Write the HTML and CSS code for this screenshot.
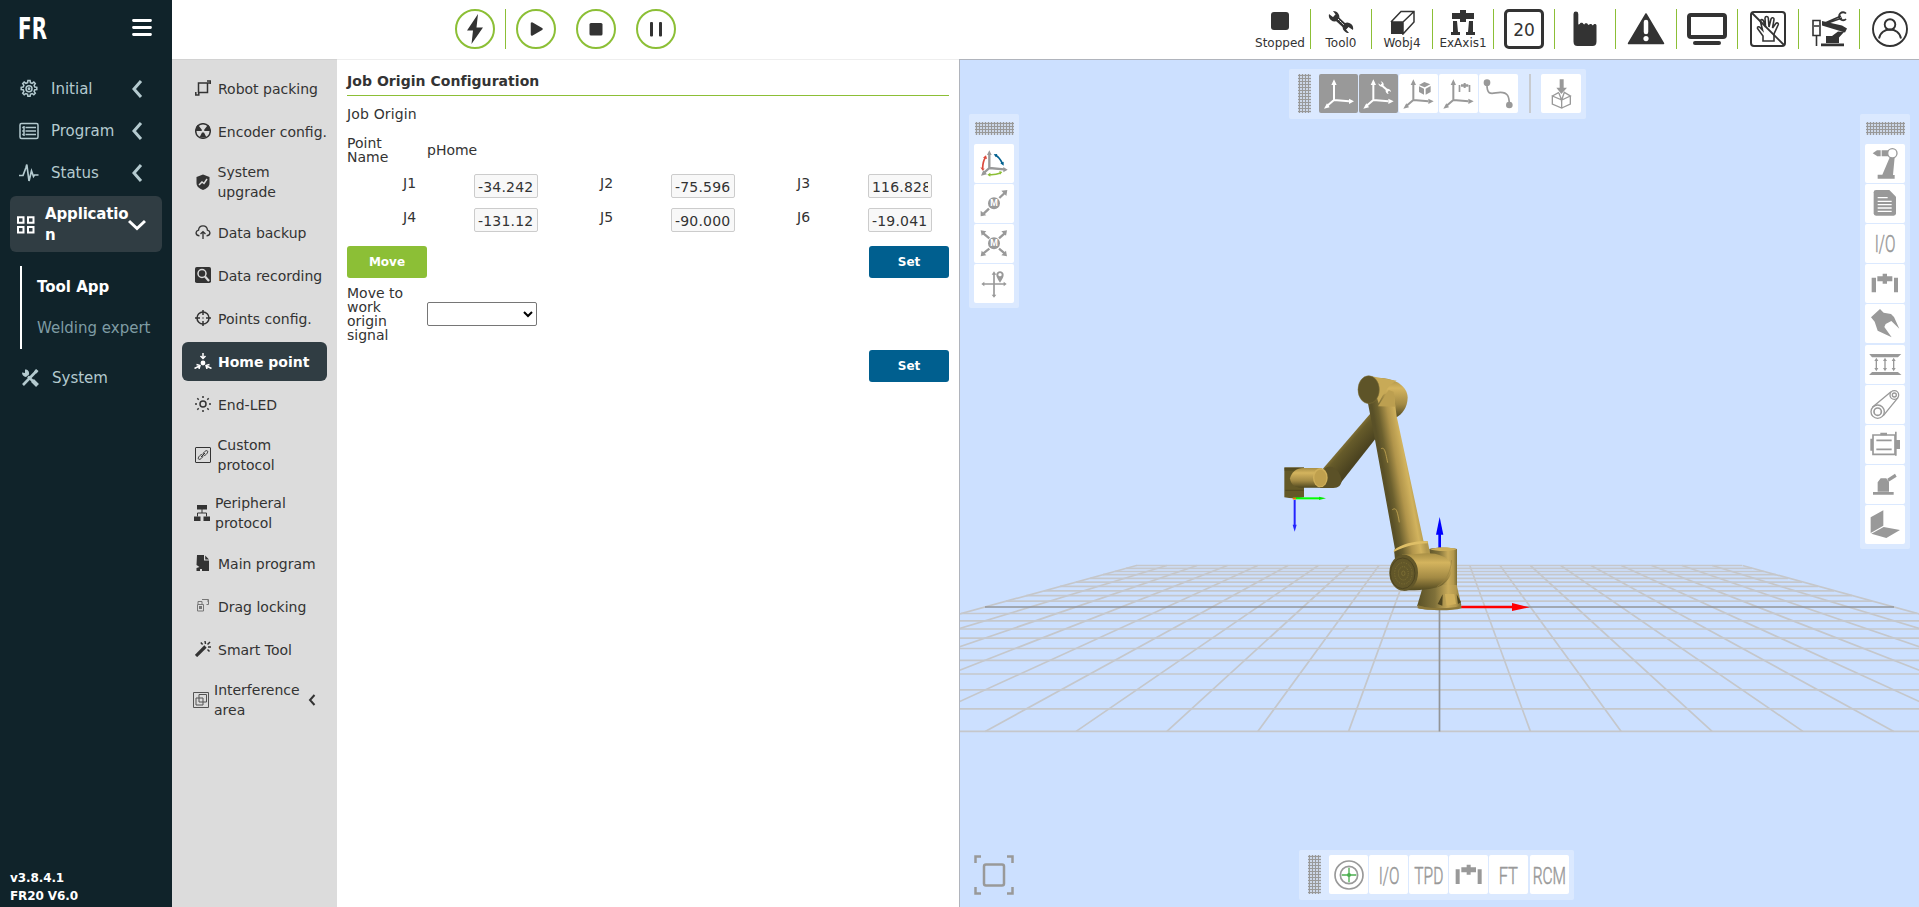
FILE: index.html
```html
<!DOCTYPE html>
<html lang="en">
<head>
<meta charset="utf-8">
<title>FR Robot Console</title>
<link rel="stylesheet" href="styles.css">
</head>
<body>
<div class="app">
<aside class="sidebar">
  <div class="brand">
    <svg width="28" height="22" viewBox="0 0 28 22" class="logo"><text x="-1" y="21.600" textLength="29" lengthAdjust="spacingAndGlyphs">FR</text></svg>
    <svg width="20" height="18" viewBox="0 0 20 18" class="burger"><path d="M1.5 1.5h17M1.5 8.5h17M1.5 15.5h17"/></svg>
  </div>
  <nav class="menu">
    <a class="item"><svg class="ic" viewBox="0 0 20 20"><path d="M8.600 3.600 8.900 1.600h2.200l.3 2 1.700.7 1.700-1.200 1.500 1.500-1.200 1.700.7 1.700 2 .3v2.200l-2 .3-.7 1.700 1.200 1.700-1.500 1.500-1.700-1.200-1.700.7-.3 2H8.900l-.3-2-1.700-.7-1.700 1.200-1.500-1.500 1.200-1.700-.7-1.700-2-.3V8.300l2-.3.7-1.700-1.200-1.700 1.500-1.500 1.700 1.200z"/><circle cx="10" cy="9.800" r="3"/><circle cx="10" cy="9.800" r=".7"/></svg><span>Initial</span><svg class="chev" viewBox="0 0 12 18"><path d="M10 1 3 9l7 8"/></svg></a>
    <a class="item"><svg class="ic" viewBox="0 0 20 20"><rect x="1" y="2.500" width="18" height="15" rx="1.500"/><path d="M6.500 6.500H17M6.500 10H17M6.500 13.500H17M3.200 6.500h1.600M3.200 10h1.600M3.200 13.500h1.600M5 5v10"/></svg><span>Program</span><svg class="chev" viewBox="0 0 12 18"><path d="M10 1 3 9l7 8"/></svg></a>
    <a class="item"><svg class="ic" viewBox="0 0 20 20"><path d="M0 12.500h4l3-8 .8-3L10 18l2.500-10 2 5.500 1-1.500h4" stroke-width="1.700"/></svg><span>Status</span><svg class="chev" viewBox="0 0 12 18"><path d="M10 1 3 9l7 8"/></svg></a>
    <a class="item open"><svg class="ic" viewBox="0 0 20 20"><path d="M2 2.200h5.500v5.500H2zM12 2.200h5.500v5.500H12zM2 12h5.500v5.500H2zM12 12h5.500v5.500H12z" stroke-width="2"/></svg><span>Applicatio<br>n</span><svg class="chev down" viewBox="0 0 18 12"><path d="M1 2l8 7.500L17 2"/></svg></a>
    <div class="sub"><a class="on">Tool App</a><a>Welding expert</a></div>
    <a class="item sys"><svg class="ic" viewBox="0 0 20 20"><path d="M17 2.500 3 17M16.500 16.500 8 8.500" stroke-width="2.600"/><path d="M17.500 17.500l-5-5" stroke-width="4"/><path d="M2 4.500l3 .5V1.500c3 0 4.500 2 4 5L6 9C3.500 8.500 2 7 2 4.500z" class="fill"/><path d="M16 1l2.500 2-2 2.500-2.500-2z" class="fill"/></svg><span>System</span></a>
  </nav>
  <div class="version">v3.8.4.1<br>FR20 V6.0</div>
</aside>
<div class="right">
<header class="topbar">
  <div class="controls">
    <button class="round"><svg viewBox="0 0 40 40"><path d="M23 5 12 21.500h6L16.500 35 28 18.500h-6.500z"/></svg></button>
    <i class="bar"></i>
    <button class="round"><svg viewBox="0 0 40 40"><path d="M16 14.500v11l9.500-5.500z" stroke-width="2.500" stroke-linejoin="round"/></svg></button>
    <button class="round"><svg viewBox="0 0 40 40"><rect x="13.500" y="14" width="13" height="12.500" rx="1.500"/></svg></button>
    <button class="round"><svg viewBox="0 0 40 40"><rect x="14" y="13" width="3" height="14.500" rx="1"/><rect x="23" y="13" width="3" height="14.500" rx="1"/></svg></button>
  </div>
  <div class="status">
    <div class="cell"><svg viewBox="0 0 60 26"><rect x="21" y="3" width="18" height="18" rx="3"/></svg><b>Stopped</b></div>
    <div class="cell"><svg viewBox="0 0 60 26"><path d="M23 7 36 19" stroke-width="4.500"/><path d="M18 5a6 6 0 0 0 8 7l2-2a6 6 0 0 0-6-8l3 4-2.500 2.500zM42 21a6 6 0 0 0-8-7l-2 2a6 6 0 0 0 6 8l-3-3.500L37.500 18z"/><path d="M27 10l6 6" stroke="#fff" stroke-width="1" stroke-dasharray="2 1"/></svg><b>Tool0</b></div>
    <div class="cell"><svg viewBox="0 0 60 26"><path d="M19 13h12v12H19z"/><path d="M19 13 29 2.500h13V13L31 25V13L42 2.500M19 13h12" class="line" stroke-width="1.500"/></svg><b>Wobj4</b></div>
    <div class="cell"><svg viewBox="0 0 60 26"><path d="M19 4h8V1h6v3h8v6h-8v3h-6v-3h-8zM20 12h4l1 11h2v3h-9v-3h2zM36 12h4v11h2v3h-9v-3h2z"/></svg><b>ExAxis1</b></div>
    <div class="cell"><span class="speed">20</span></div>
    <div class="cell"><svg class="big" viewBox="0 0 60 60"><path d="M18.500 14a2.400 2.400 0 0 1 4.800 0v10.500l1.500-.5c.4-1.800 3.200-1.500 3.600 0l1 .5c.3-1.700 3.200-1.500 3.500 0l1 .5c.4-1.500 3-1.500 3.400 0l.7.5c.5-2 3.500-2 3.500 0v16q0 4.500-4 4.500H22.500q-4 0-4-4.500z"/></svg></div>
    <div class="cell"><svg class="big" viewBox="0 0 60 60"><path d="M30 14 12.500 43.500h35z" stroke-width="1.500" stroke-linejoin="round"/><path d="M30 22v10" stroke="#fff" stroke-width="4.500" stroke-linecap="round"/><circle cx="30" cy="38.600" r="2.600" fill="#fff"/></svg></div>
    <div class="cell"><svg class="big" viewBox="0 0 60 60"><rect x="12" y="15" width="36" height="22" rx="2" class="line" stroke-width="4"/><path d="M18 43h24" stroke-width="4" stroke-linecap="round"/></svg></div>
    <div class="cell"><svg class="big" viewBox="0 0 60 60"><rect x="13" y="12" width="34" height="34" rx="3" class="line" stroke-width="2"/><path d="M25 41v-5l-5.500-7.500c-.4-2 1.500-2.200 2.800-.8l2.200 2.300-2-8.500c-.2-2.200 2.300-2.600 3-.5l2 6-.5-9c.2-2 3-2 3.300 0l.7 9 2-8c.7-2 3.300-1.300 3 .6L34.500 28l3.300-4.500c1.200-1.500 3-.2 2.400 1.300L36 34v7z" class="line" stroke-width="1.600"/><path d="M14 13l32 32" stroke-width="1.800"/></svg></div>
    <div class="cell"><svg class="big" viewBox="0 0 60 60"><path d="M22 43.500h23v2.800H22zM27 36h13v7H27zM33 36l6-4.500 6 .5-5 5.500zM23 21l20 4.500 5 3-2 4-23-7z"/><path d="M26 23l16-7M26 24l17-6" stroke-width="1.500"/><path d="M47 13.500a4 4 0 1 0 0 5.500" class="line" stroke-width="1.800"/><path d="M14 20.500h7v15h-7zM15 26h5M17.500 36v10" class="line" stroke-width="1.600"/></svg></div>
    <div class="cell"><svg class="big" viewBox="0 0 60 60"><circle cx="30" cy="29" r="17" class="line" stroke-width="1.900"/><circle cx="30" cy="24.500" r="5.300" class="line" stroke-width="1.900"/><path d="M19 38.500c2-12 20-12 22 0" class="line" stroke-width="1.900"/></svg></div>
  </div>
</header>
<div class="body">
<nav class="tools">
  <a><svg viewBox="0 0 16 16"><path d="M3.500 3h9v9.500h-9zM12.500 3h3V.8M.8 12v3h3V12M12 1h3.500v3" class="l"/></svg>Robot packing</a>
  <a><svg viewBox="0 0 16 16"><circle cx="8" cy="8" r="7.300" class="l"/><path d="M7 7 3 1.800A7 7 0 0 0 1 8h5.500zM9 7l4-5.200A7 7 0 0 1 15 8H9.500zM7 9.500 4.500 14.500h7L9 9.500z"/></svg>Encoder config.</a>
  <a class="two"><svg viewBox="0 0 16 16"><path d="M8 .5 14.500 3v6c0 4-3.500 5.800-6.500 7-3-1.200-6.500-3-6.500-7V3z"/><path d="M4 11l3-3 2 1.500L12 5" stroke="#dcdcdc" class="l"/></svg><span>System<br>upgrade</span></a>
  <a><svg viewBox="0 0 18 16"><path d="M5 12.200C1 12.200-.5 7.500 4 6 4.500-.5 13.500-.5 14 6c4.500 1.500 3 6.200-1 6.200M9 15.800V8M6.200 10.200 9 7.500l2.800 2.700" class="l"/></svg>Data backup</a>
  <a><svg viewBox="0 0 16 16"><rect width="16" height="16" rx="1.800"/><circle cx="7" cy="6.500" r="4" stroke="#dcdcdc" class="l"/><path d="M10 9.500l4 4.500" stroke="#dcdcdc" stroke-width="2.200"/></svg>Data recording</a>
  <a><svg viewBox="0 0 16 16"><circle cx="8" cy="8" r="6" class="l"/><path d="M8 0v5M8 11v5M0 8h5M11 8h5M7.500 8h1" class="l"/></svg>Points config.</a>
  <a class="on"><svg viewBox="0 0 18 16"><circle cx="9" cy="10" r="2.400"/><path d="M9 0v5M6.500 3 9 5.500 11.500 3M.5 15.500l5-2.500M2.500 11.500l3.500 1-1 3.500M17.500 15.500l-5-2.500M15.500 11.500l-3.500 1 1 3.500" class="l"/></svg>Home point</a>
  <a><svg viewBox="0 0 16 16"><circle cx="8" cy="8" r="3" class="l"/><path d="M8 0v2M8 14v2M0 8h2M14 8h2M2.300 2.300l1.400 1.400M12.300 12.300l1.400 1.400M2.300 13.700l1.400-1.400M12.300 3.700l1.400-1.400" class="l"/></svg>End-LED</a>
  <a class="two"><svg viewBox="0 0 16 16"><rect x=".5" y=".5" width="15" height="15" rx=".5" class="l thin"/><path d="M8 7.500c0-2 3-4.500 4.300-3.700 1.500 1.200-1.500 4.700-3.300 4.700M8 8.500c0 2-3 4.500-4.300 3.700C2.200 11 5.200 7.500 7 7.500M6 10l4-4" class="l thin"/></svg><span>Custom<br>protocol</span></a>
  <a class="two per"><svg viewBox="0 0 16 16"><path d="M3 0h10v4.500H3zM0 11.500h6.500V16H0zM9.500 11.500H16V16H9.500z"/><path d="M8 4v4M3.500 11.500V8h9v3.500" class="l thin"/></svg><span>Peripheral<br>protocol</span></a>
  <a><svg viewBox="0 0 16 16"><path d="M2 0h7v5.500h5V16H7v-2H5v2H1.500v-3l3-1-3-2zM10.200.5 14 4.500h-3.800z"/><path d="M6 12l3-1.500" stroke="#dcdcdc"/></svg>Main program</a>
  <a><svg class="dim" viewBox="0 0 16 16"><path d="M3 6V3.500h4V6M2.500 6.500h6v6.500h-6zM7 1.500h6.500v5h-2M12 3h2" class="l thin"/><path d="M4 8h3v3H4z"/></svg>Drag locking</a>
  <a><svg viewBox="0 0 16 16"><path d="M1 15 10.500 5.500" stroke-width="3.200"/><path d="M10 0l.5 3M5.800 1.500l1.800 2M15 1l-2.500 2.500M13 6h3M12.500 8.500l2 2" class="l"/></svg>Smart Tool</a>
  <a class="two inter"><svg viewBox="0 0 16 16" class="soft"><path d="M.5.500h15v15H.5zM6 2.500h7.500V10H6zM3 6h7v7H3z" class="l thin"/></svg><span>Interference<br>area</span><svg class="more" viewBox="0 0 8 12"><path d="M6.500 1 2 6l4.500 5" stroke-width="2" fill="none"/></svg></a>
</nav>
<main class="panel">
  <h1>Job Origin Configuration</h1>
  <p class="subtitle">Job Origin</p>
  <div class="name"><span class="label">Point Name</span><span>pHome</span></div>
  <div class="joints">
    <div><label>J1</label><input value="-34.242" disabled></div>
    <div><label>J2</label><input value="-75.596" disabled></div>
    <div><label>J3</label><input value="116.828" disabled></div>
    <div><label>J4</label><input value="-131.12" disabled></div>
    <div><label>J5</label><input value="-90.000" disabled></div>
    <div><label>J6</label><input value="-19.041" disabled></div>
  </div>
  <div class="actions"><button class="btn green">Move</button><button class="btn">Set</button></div>
  <div class="signal"><span class="label">Move to work origin signal</span><select></select></div>
  <div class="actions end"><button class="btn">Set</button></div>
</main>
<section class="view">
  <svg class="scene" viewBox="960 60 959 847">
    <defs>
      <linearGradient id="arm" gradientUnits="userSpaceOnUse" x1="375" y1="360" x2="460" y2="345"><stop offset="0" stop-color="#595027"/><stop offset=".18" stop-color="#6c602e"/><stop offset=".5" stop-color="#b1954b"/><stop offset=".8" stop-color="#d2b35e"/><stop offset="1" stop-color="#b3994e"/></linearGradient>
      <linearGradient id="tube" x1="0" y1="0" x2="0" y2="1"><stop offset="0" stop-color="#a88f45"/><stop offset=".25" stop-color="#d4b45e"/><stop offset=".65" stop-color="#a38a44"/><stop offset="1" stop-color="#50481f"/></linearGradient>
      <linearGradient id="fore" gradientUnits="userSpaceOnUse" x1="240" y1="245" x2="295" y2="293"><stop offset="0" stop-color="#9a833e"/><stop offset=".35" stop-color="#665b2a"/><stop offset="1" stop-color="#4b4320"/></linearGradient>
      <linearGradient id="base" x1="0" y1="0" x2="1" y2="0"><stop offset="0" stop-color="#5a5127"/><stop offset=".4" stop-color="#80713a"/><stop offset=".7" stop-color="#c9ab5a"/><stop offset=".88" stop-color="#b3984d"/><stop offset="1" stop-color="#7a6c34"/></linearGradient>
    </defs>
    <path class="grid" d="M531 731.400h1817M613 708.800h1653M682 689.900h1514M740 674h1398M790 660.300h1298M833 648.500h1212M871 638.100h1136M905 629h1068M934 620.800h1010M961 613.500h956M1006 601.100h866M1026 595.700h826M1044 590.800h790M1060 586.300h758M1076 582.100h726M1090 578.300h698M1103 574.700h673M1115 571.500h649M1126 568.400h626M1136 565.500h606"/>
    <path class="grid" d="M1136.500 565.500 531 731.400M1166.800 565.500 621.800 731.400M1197.100 565.500 712.600 731.400M1227.400 565.500 803.500 731.400M1257.700 565.500 894.300 731.400M1288 565.500 985.200 731.400M1318.300 565.500 1076.100 731.400M1348.600 565.500 1166.900 731.400M1378.900 565.500 1257.800 731.400M1409.200 565.500 1348.600 731.400M1469.800 565.500 1530.400 731.400M1500.100 565.500 1621.200 731.400M1530.400 565.500 1712.100 731.400M1560.700 565.500 1802.900 731.400M1591 565.500 1893.800 731.400M1621.300 565.500 1984.700 731.400M1651.600 565.500 2075.500 731.400M1681.900 565.500 2166.400 731.400M1712.200 565.500 2257.200 731.400M1742.500 565.500 2348 731.400"/>
    <path class="axis" d="M985 607h909M1439.500 565.500v166"/>
    <g transform="translate(1260 360) scale(.33333)">
      <path d="M539 570V522" stroke="#00f" stroke-width="8"/><path d="M528 524 539 471l11 53z" fill="#00f"/>
      <path d="M338 55c60-6 104 20 105 58-1 30-15 48-38 62z" fill="url(#tube)"/>
      <path d="M332 160 190 325l-2 40 45 15L350 232z" fill="url(#fore)"/>
      <path d="M195 325c25-15 45 10 50 35 0 15-10 24-25 24h-40z" fill="#5b5127"/>
      <path d="M73 322h59v90c-20 4-40 4-59 0z" fill="#645927"/>
      <path d="M73 326h59v4H73M76 391h55" stroke="#463e1b" stroke-width="2" fill="none"/>
      <path d="M90 355c5-20 20-31 40-31h55v59h-60c-22 0-33-10-35-28z" fill="url(#tube)"/>
      <ellipse cx="181" cy="353" rx="22" ry="29" fill="#d0b05b"/><ellipse cx="181" cy="354" rx="18" ry="25" fill="#bfa04e"/>
      <path d="M508 567c20-6 64-6 83 0v135h-70l-20-40z" fill="url(#base)"/>
      <path d="M490 675h100l14 60-6 10c-34 6-86 6-120 0l-6-9z" fill="url(#base)"/>
      <path d="M473 735c30 12 100 12 132 2v8c-30 9-105 7-132 0z" fill="#8d7839"/>
      <path d="M555 702h28l5 30-28 5z" fill="#d0b05b"/><path d="M548 703 533 732l14 5zM590 703l4 29 9-5z" fill="#4d4520"/>
      <path d="M510 568c20-8 64-6 80 0-20 8-64 6-80 0z" fill="#ccae5a"/>
      <path d="M322 120 400 94l10 75 85 395-88 15-62-340z" fill="url(#arm)"/>
      <path d="M330 48 410 62c-22 10-38 36-54 68z" fill="#c8aa57"/>
      <path d="M386 90 354 139l52 1-5-45z" fill="#bc9f50"/>
      <path d="M402 570c28-21 66-28 101-26l12 60-108 12z" fill="url(#arm)"/>
      <path d="M402 570c28-21 66-28 101-26v6c-30 0-65 8-102 26z" fill="#dfbf67"/>
      <path d="M426 584c50 0 86-12 120 4 40 12 38 62 0 88-30 15-70 14-115 16z" fill="url(#tube)"/>
      <path d="M575 600c-3 35-15 61-43 80" stroke="#9d8541" stroke-width="2" fill="none"/>
      <ellipse cx="431" cy="638" rx="43" ry="54" fill="#625729"/><ellipse cx="428" cy="640" rx="37" ry="46" fill="none" stroke="#4d4420" stroke-width="3"/>
      <ellipse cx="430" cy="640" rx="26" ry="32" fill="none" stroke="#857638" stroke-width="2" stroke-dasharray="4 4"/><ellipse cx="430" cy="640" rx="15" ry="20" fill="none" stroke="#8d7d3b" stroke-width="2" stroke-dasharray="3 3"/><ellipse cx="430" cy="640" rx="5" ry="7" fill="none" stroke="#857638" stroke-width="2"/>
      <ellipse cx="326" cy="89" rx="32" ry="42" fill="#5e5428" stroke="#83733a" stroke-width="1.500"/>
      <path d="M363 266c10-4 12 2 20 42M397 449c10-6 14-4 21 38" stroke="#b99d4d" stroke-width="3" fill="none"/>
      <path d="M100 415h78" stroke="#0f0" stroke-width="6"/><path d="M177 410l21 5-21 5z" fill="#0e0"/>
      <path d="M104 420v76" stroke="#2424ff" stroke-width="6"/><path d="M98 494h12l-6 21z" fill="#2424ff"/><path d="M98 413h10v5H98z" fill="#f60"/>
      <path d="M604 741h155" stroke="red" stroke-width="7"/><path d="M756 729l53 13-53 11z" fill="red"/>
    </g>
  </svg>
  <div class="bar-h top">
    <i class="grip v"></i>
    <button class="dark"><svg viewBox="0 0 120 120"><path d="M45 78V28M45 78l-21 18M45 78l45 4" class="w6"/><path d="M37 33 45 16l8 17zM15 104l17-4-8-12zM105 82 90 74v16z"/></svg></button>
    <button class="dark"><svg viewBox="0 0 120 120"><path d="M43 78V28M43 78l-21 18M43 78l45 4" class="w6"/><path d="M35 33 43 16l8 17zM13 104l17-4-8-12zM104 82 88 74v16z"/><path d="M66 32 88 51" stroke-width="6"/><path d="M58 28a10 10 0 0 0 13 9l3-3a10 10 0 0 0-9-12l4 6-4 5zM96 54a10 10 0 0 0-13-9l-3 3a10 10 0 0 0 9 12l-3-6 4-4z"/></svg></button>
    <button><svg viewBox="0 0 120 120"><path d="M43 78V28M43 78l-21 18M43 78l45 4" class="w6"/><path d="M35 33 43 16l8 17zM13 104l17-4-8-12zM104 82 88 74v16zM60 33l16-9 18 7-17 9zM60 37l15 7v18l-15-8zM80 44l15-8v18l-15 8z"/></svg></button>
    <button><svg viewBox="0 0 120 120"><path d="M43 78V28M43 78l-21 18M43 78l45 4" class="w6"/><path d="M35 33 43 16l8 17zM13 104l17-4-8-12zM104 82 88 74v16zM59 33h5v21h-5zM89 33h5v21h-5zM66 31h8v-4h6v4h8v7h-8v4h-6v-4h-8z"/></svg></button>
    <button><svg viewBox="0 0 120 120"><circle cx="24" cy="26" r="10"/><circle cx="91" cy="93" r="10"/><path d="M24 28c-2 44 20 27 40 27 22 0 27 12 27 38" class="w5"/></svg></button>
    <i class="sep"></i>
    <button class="wide"><svg viewBox="0 0 120 120"><path d="M56 16h12v25h10L61 60 46 41h10z"/><path d="M34 66l20-11M70 55l18 11-26 12zM34 66l28 12v24L34 90zM88 66v24l-26 12M54 58l8 20" class="w4"/></svg></button>
  </div>
  <div class="bar-v left">
    <i class="grip h"></i>
    <button><svg viewBox="0 0 120 120"><path d="M46 72V28M46 72 28 88M46 72l44 4" class="w7"/><path d="M39 33 46 19l7 14zM21 95l18-4-11-12zM101 77 88 69v16z"/><path d="M26 73c0-15 3-25 9-34" stroke="#dc4b3e" class="w5"/><path d="M19 70l13 4-6 6zM27 41l9-7 3 11z" fill="#dc4b3e"/><path d="M65 34c9 5 15 14 20 24" stroke="#00608f" class="w5"/><path d="M59 31l11-1-4 10zM79 58l10-5v12z" fill="#00608f"/><path d="M46 92c13 1 23-1 34-5" stroke="#8cbf36" class="w5"/><path d="M40 92l9-6v12zM76 81l9 3-7 8z" fill="#8cbf36"/></svg></button>
    <button><svg viewBox="0 0 120 120"><path d="M92 27 76 42M45 74 29 89" class="w7"/><path d="M82 20l18-2-3 18zM20 80v17l17-3z"/><circle cx="60" cy="58" r="18"/><text x="60" y="67" class="m">M</text></svg></button>
    <button><svg viewBox="0 0 120 120"><path d="M28 28l18 15M92 28 75 43M28 88l18-14M92 88 75 74" class="w7"/><path d="M20 19l17 3-14 13zM99 19l-17 3 14 13zM20 97l3-17 14 14zM99 97l-3-17-14 14z"/><circle cx="60" cy="58" r="18"/><text x="60" y="67" class="m">M</text></svg></button>
    <button><svg viewBox="0 0 120 120"><path d="M60 28v68M27 60h65" class="w5"/><path d="M53 32l7-10 7 10zM53 92l7 9 7-9zM31 53l-9 7 9 7zM89 53l9 7-9 7zM78 56C68 40 67 36 67 32c0-14 22-14 22 0 0 6-3 12-11 24z"/><circle cx="78" cy="32" r="5" fill="#fff"/></svg></button>
  </div>
  <div class="bar-v rightbar">
    <i class="grip h"></i>
    <button><svg viewBox="0 0 120 120"><path d="M75 38 52 92H38v12h51V93h-5l5-53zM23 28 36 19v17zM36 19h11v18H36zM50 19h23v18H50z"/><circle cx="82" cy="28" r="14" fill="#fff" stroke="#999" stroke-width="4"/></svg></button>
    <button><svg viewBox="0 0 120 120"><path d="M26 25q0-7 7-7h40l20 20v50q0 7-7 7H33q-7 0-7-7z"/><path d="M38 41h30M38 52h42M38 62h42M38 72h42M38 82h42" stroke="#fff" stroke-width="4"/></svg></button>
    <button><svg viewBox="0 0 120 120"><text x="29" y="83" textLength="62" lengthAdjust="spacingAndGlyphs">I/O</text></svg></button>
    <button><svg viewBox="0 0 120 120"><path d="M20 41h13v44H20zM87 41h12v44H87zM37 37h16v-8h13v8h16v15H66v7H53v-7H37z"/></svg></button>
    <button><svg viewBox="0 0 120 120"><path d="M18 40 45 15l11 11 22 4 9 9 16 35-24-23-17 9-4 9 22 31-42-20-9-27z"/></svg></button>
    <button><svg viewBox="0 0 120 120"><path d="M17 29h87l-6 6H22zM17 88h87l-6-5H22zM34 46v25M60 46v25M86 46v25" stroke-width="4"/><path d="M28 48l6-10 6 10zM54 48l6-10 6 10zM80 48l6-10 6 10zM28 69l6 10 6-10zM54 69l6 10 6-10zM80 69l6 10 6-10z"/></svg></button>
    <button><svg viewBox="0 0 120 120"><circle cx="38" cy="80" r="20" class="w4"/><circle cx="38" cy="80" r="11" class="w5"/><circle cx="88" cy="30" r="13" class="w4"/><circle cx="88" cy="30" r="6" class="w4"/><path d="M22 67 78 20M55 92l44-54" class="w4"/></svg></button>
    <button><svg viewBox="0 0 120 120"><path d="M24 30h66v58H24zM34 46h46M34 73h46" class="w5"/><path d="M46 23h20v8H46zM16 41h8v36h-8zM90 20h5v72h-5zM95 45h10v27H95z"/></svg></button>
    <button><svg viewBox="0 0 120 120"><path d="M24 81h62v8H24zM38 80V52l9-12h17l8 12v28zM67 41l23-15 5 9-24 15z"/></svg></button>
    <button><svg viewBox="0 0 120 120"><path d="M17 37 55 16v46L17 84zM19 86l37-20 49 9-41 24z"/></svg></button>
  </div>
  <svg class="frame" viewBox="0 0 40 40"><path d="M7 1.500H1.500V8M33 1.500h5.500V8M1.500 32v6.500H7M38.500 32v6.500H33" stroke-width="2.500"/><rect x="10" y="9.500" width="20" height="21" rx="2" stroke-width="2.500"/></svg>
  <div class="bar-h bottom">
    <i class="grip v"></i>
    <button><svg viewBox="0 0 120 120"><circle cx="60" cy="60" r="42" class="w5"/><circle cx="60" cy="60" r="26" class="w5"/><path d="M60 38v44M38 60h44" stroke="#4caf50" stroke-width="4"/><circle cx="60" cy="60" r="6" fill="#4caf50"/></svg></button>
    <button><svg viewBox="0 0 120 120"><text x="29" y="86" textLength="62" lengthAdjust="spacingAndGlyphs">I/O</text></svg></button>
    <button><svg viewBox="0 0 120 120"><text x="16" y="86" textLength="87" lengthAdjust="spacingAndGlyphs">TPD</text></svg></button>
    <button><svg viewBox="0 0 120 120"><path d="M20 43h12v44H20zM86 43h12v44H86zM37 37h16v-8h12v8h16v15H65v7H53v-7H37z"/></svg></button>
    <button><svg viewBox="0 0 120 120"><text x="29" y="86" textLength="58" lengthAdjust="spacingAndGlyphs">FT</text></svg></button>
    <button><svg viewBox="0 0 120 120"><text x="8" y="86" textLength="100" lengthAdjust="spacingAndGlyphs">RCM</text></svg></button>
  </div>
</section>
</div>
</div>
</div>
</body>
</html>
```

FILE: styles.css
```css
* { box-sizing: border-box; }
body { margin: 0; font-family: Verdana, "DejaVu Sans", sans-serif; font-size: 14px; color: #333; background: #fff; }
button { margin: 0; padding: 0; border: 0; font-family: inherit; }
svg { display: block; flex: none; }
.app { display: flex; height: 907px; overflow: hidden; }

.sidebar { width: 172px; flex: none; display: flex; flex-direction: column; background: #10232a; color: #b4cacf; }
.brand { display: flex; justify-content: space-between; padding: 17px 20px 0 19px; height: 68px; }
.logo { overflow: visible; }
.logo text { font: bold 30px "DejaVu Sans", sans-serif; fill: #fff; }
.burger { margin-top: 2px; fill: none; stroke: #fff; stroke-width: 2.800; stroke-linecap: round; }
.menu { flex: 1; font-size: 15px; }
.item { display: flex; align-items: center; height: 42px; padding: 0 29px 0 19px; }
.item span { flex: 1; margin-left: 12px; white-space: nowrap; }
.ic { width: 20px; height: 20px; fill: none; stroke: currentColor; stroke-width: 1.500; }
.ic .fill { fill: currentColor; stroke: none; }
.chev { width: 12px; height: 18px; fill: none; stroke: currentColor; stroke-width: 3; }
.open { height: 56px; margin: 2px 10px 0; padding: 2px 16px 0 6px; border-radius: 6px; background: #303d43; color: #fff; font-weight: bold; line-height: 21px; letter-spacing: -.15px; }
.open span { margin-left: 9px; }
.open .chev { width: 18px; height: 12px; margin-left: -10px; }
.sub { display: flex; flex-direction: column; height: 83px; margin: 14px 0 8px 20px; padding: 1px 0 0 15px; border-left: 2px solid #fff; line-height: 41px; color: #7f9ca4; white-space: nowrap; }
.sub .on { color: #fff; font-weight: bold; }
.sys { padding-left: 20px; }
.sys span { margin-left: 12px; }
.version { padding: 0 0 2px 10px; font-size: 12px; font-weight: bold; line-height: 18px; letter-spacing: -.1px; color: #fff; }

.right { flex: 1; min-width: 0; display: flex; flex-direction: column; }
.topbar { height: 59px; flex: none; display: flex; justify-content: space-between; }
.controls { display: flex; padding: 9px 0 0 283px; }
.round { width: 40px; height: 40px; border: 2px solid #8cbf36; border-radius: 50%; background: #fff; margin-right: 20px; }
.round svg { width: 40px; height: 40px; margin: -2px; fill: #333; stroke: #333; stroke-width: 0; }
.round:first-child { margin-right: 10px; }
.bar { width: 1px; height: 40px; margin-right: 10px; background: #8cbf36; }
.status { display: flex; padding-top: 9px; }
.cell { width: 61px; height: 40px; display: flex; flex-direction: column; align-items: center; border-right: 1px solid #8cbf36; }
.cell:last-child { width: 59px; border: 0; }
.cell svg { width: 60px; height: 26px; fill: #333; stroke: #333; stroke-width: 0; }
.cell .line { fill: none; }
.cell svg.big { height: 60px; margin-top: -9px; }
.cell b { font-weight: normal; font-size: 12px; line-height: 17px; }
.speed { width: 40px; height: 40px; border: 3px solid #333; border-radius: 5px; font-size: 17px; line-height: 36px; text-align: center; }

.body { flex: 1; display: flex; min-height: 0; }
.tools { width: 165px; flex: none; padding: 8.500px 10px 0; background: #dcdcdc; border-top: 1px solid #d2d2d2; }
.tools a { display: flex; align-items: center; height: 39px; margin-bottom: 4px; padding: 2px 0 0 13px; border-radius: 6px; white-space: nowrap; line-height: 20px; }
.tools svg { width: 16px; height: 16px; margin: -2px 7px 0 0; fill: currentColor; stroke: currentColor; stroke-width: 0; }
.tools .l { fill: none; stroke-width: 1.500; }
.tools .thin { stroke-width: 1; }
.tools .two { height: 54px; padding-top: 0; }
.tools .two svg { margin: 0 6.500px 0 0; }
.tools .two.per { padding-left: 11.500px; }
.tools .two.per svg { margin-right: 5.500px; }
.tools .two.inter { padding-left: 11px; }
.tools .two.inter svg { margin-right: 5px; }
.tools .two.inter svg.more { width: 8px; height: 12px; margin: 0 0 0 8px; }
.tools .dim { opacity: .6; }
.tools .soft { opacity: .8; }
.tools .on { background: #303d43; color: #fff; font-weight: bold; }
.tools .on svg { width: 18px; margin: -2px 6px 0 -1px; }

.panel { width: 622px; flex: none; padding: 0 10px; border-top: 1px solid #eee; }
h1 { margin: 0; height: 36px; font-size: 14px; line-height: 42px; letter-spacing: .05px; border-bottom: 1px solid #8cbf36; }
.subtitle { margin: 0; height: 35px; line-height: 37px; letter-spacing: .15px; }
.name { display: flex; align-items: center; height: 38px; }
.label { width: 80px; padding-right: 20px; line-height: 14px; }
.joints { display: grid; grid-template-columns: repeat(3, 197px); row-gap: 10px; padding-top: 5px; }
.joints div { display: flex; height: 24px; padding-left: 56px; }
.joints label { width: 71px; line-height: 18px; }
.joints input { width: 64px; height: 24px; padding: 2px 3px 0; border: 1px solid #ccc; border-radius: 2px; background: #f8f8f8; color: #333; font: 14px Verdana, "DejaVu Sans", sans-serif; letter-spacing: .2px; }
.actions { display: flex; justify-content: space-between; margin-top: 14px; }
.btn { width: 80px; height: 32px; border-radius: 3px; background: #005f8f; color: #fff; font-size: 12px; font-weight: bold; }
.green { background: #8cbf36; }
.signal { display: flex; align-items: center; margin-top: 8px; height: 56px; }
select { width: 110px; height: 24px; border: 1px solid #767676; border-radius: 2px; background: #fff; }
.end { justify-content: flex-end; margin-top: 8px; }

.view { flex: 1; position: relative; overflow: hidden; background: #cce0ff; border: solid #b0b4bc; border-width: 1px 0 0 1px; }
.scene { width: 959px; height: 847px; }
.grid { fill: none; stroke: #c5c7cb; stroke-width: 1.700; }
.axis { fill: none; stroke: #929599; stroke-width: 1.700; }
.bar-h, .bar-v { position: absolute; display: flex; gap: 1.100px; background: rgba(255,255,255,.3); border-radius: 2px; }
.bar-h { height: 50px; padding: 5px 5px 5px 9px; }
.bar-v { width: 50px; flex-direction: column; padding: 8px 5px 5px; }
.top { left: 329px; top: 9px; }
.bottom { left: 339px; top: 790px; }
.left { left: 9px; top: 54px; }
.rightbar { left: 900px; top: 54px; }
.bar-h button, .bar-v button { display: flex; width: 39px; height: 39px; border-radius: 2px; background: #fff; color: #999; flex: none; }
.bar-h .wide, .bar-v button { width: 40px; }
.bar-h button svg, .bar-v button svg { width: 40px; height: 40px; overflow: visible; fill: #999; stroke: #999; stroke-width: 0; }
.bar-h .dark { background: #999; }
.bar-h .dark svg { fill: #fff; stroke: #fff; }
.view .w4, .view .w5, .view .w6, .view .w7 { fill: none; }
.w4 { stroke-width: 4; }
.w5 { stroke-width: 5; }
.w6 { stroke-width: 6; }
.w7 { stroke-width: 7; }
.view button text { font: 300 70px Roboto, sans-serif; stroke-width: 1.500; }
.view button text.m { font: bold 26px Roboto, sans-serif; fill: #fff; stroke: none; text-anchor: middle; }
.grip { background-image: radial-gradient(circle, #999 1.100px, transparent 1.500px); background-size: 3px 3px; flex: none; }
.grip.v { width: 13px; height: 39px; margin-right: 7px; }
.grip.h { width: 39px; height: 13px; margin: 0 0 8px 1px; }
.sep { width: 2px; height: 39px; margin: 0 9px 0 9.500px; background: #c8cbd0; }
.frame { position: absolute; left: 14px; top: 795px; width: 40px; height: 40px; fill: none; stroke: #999; }
```
